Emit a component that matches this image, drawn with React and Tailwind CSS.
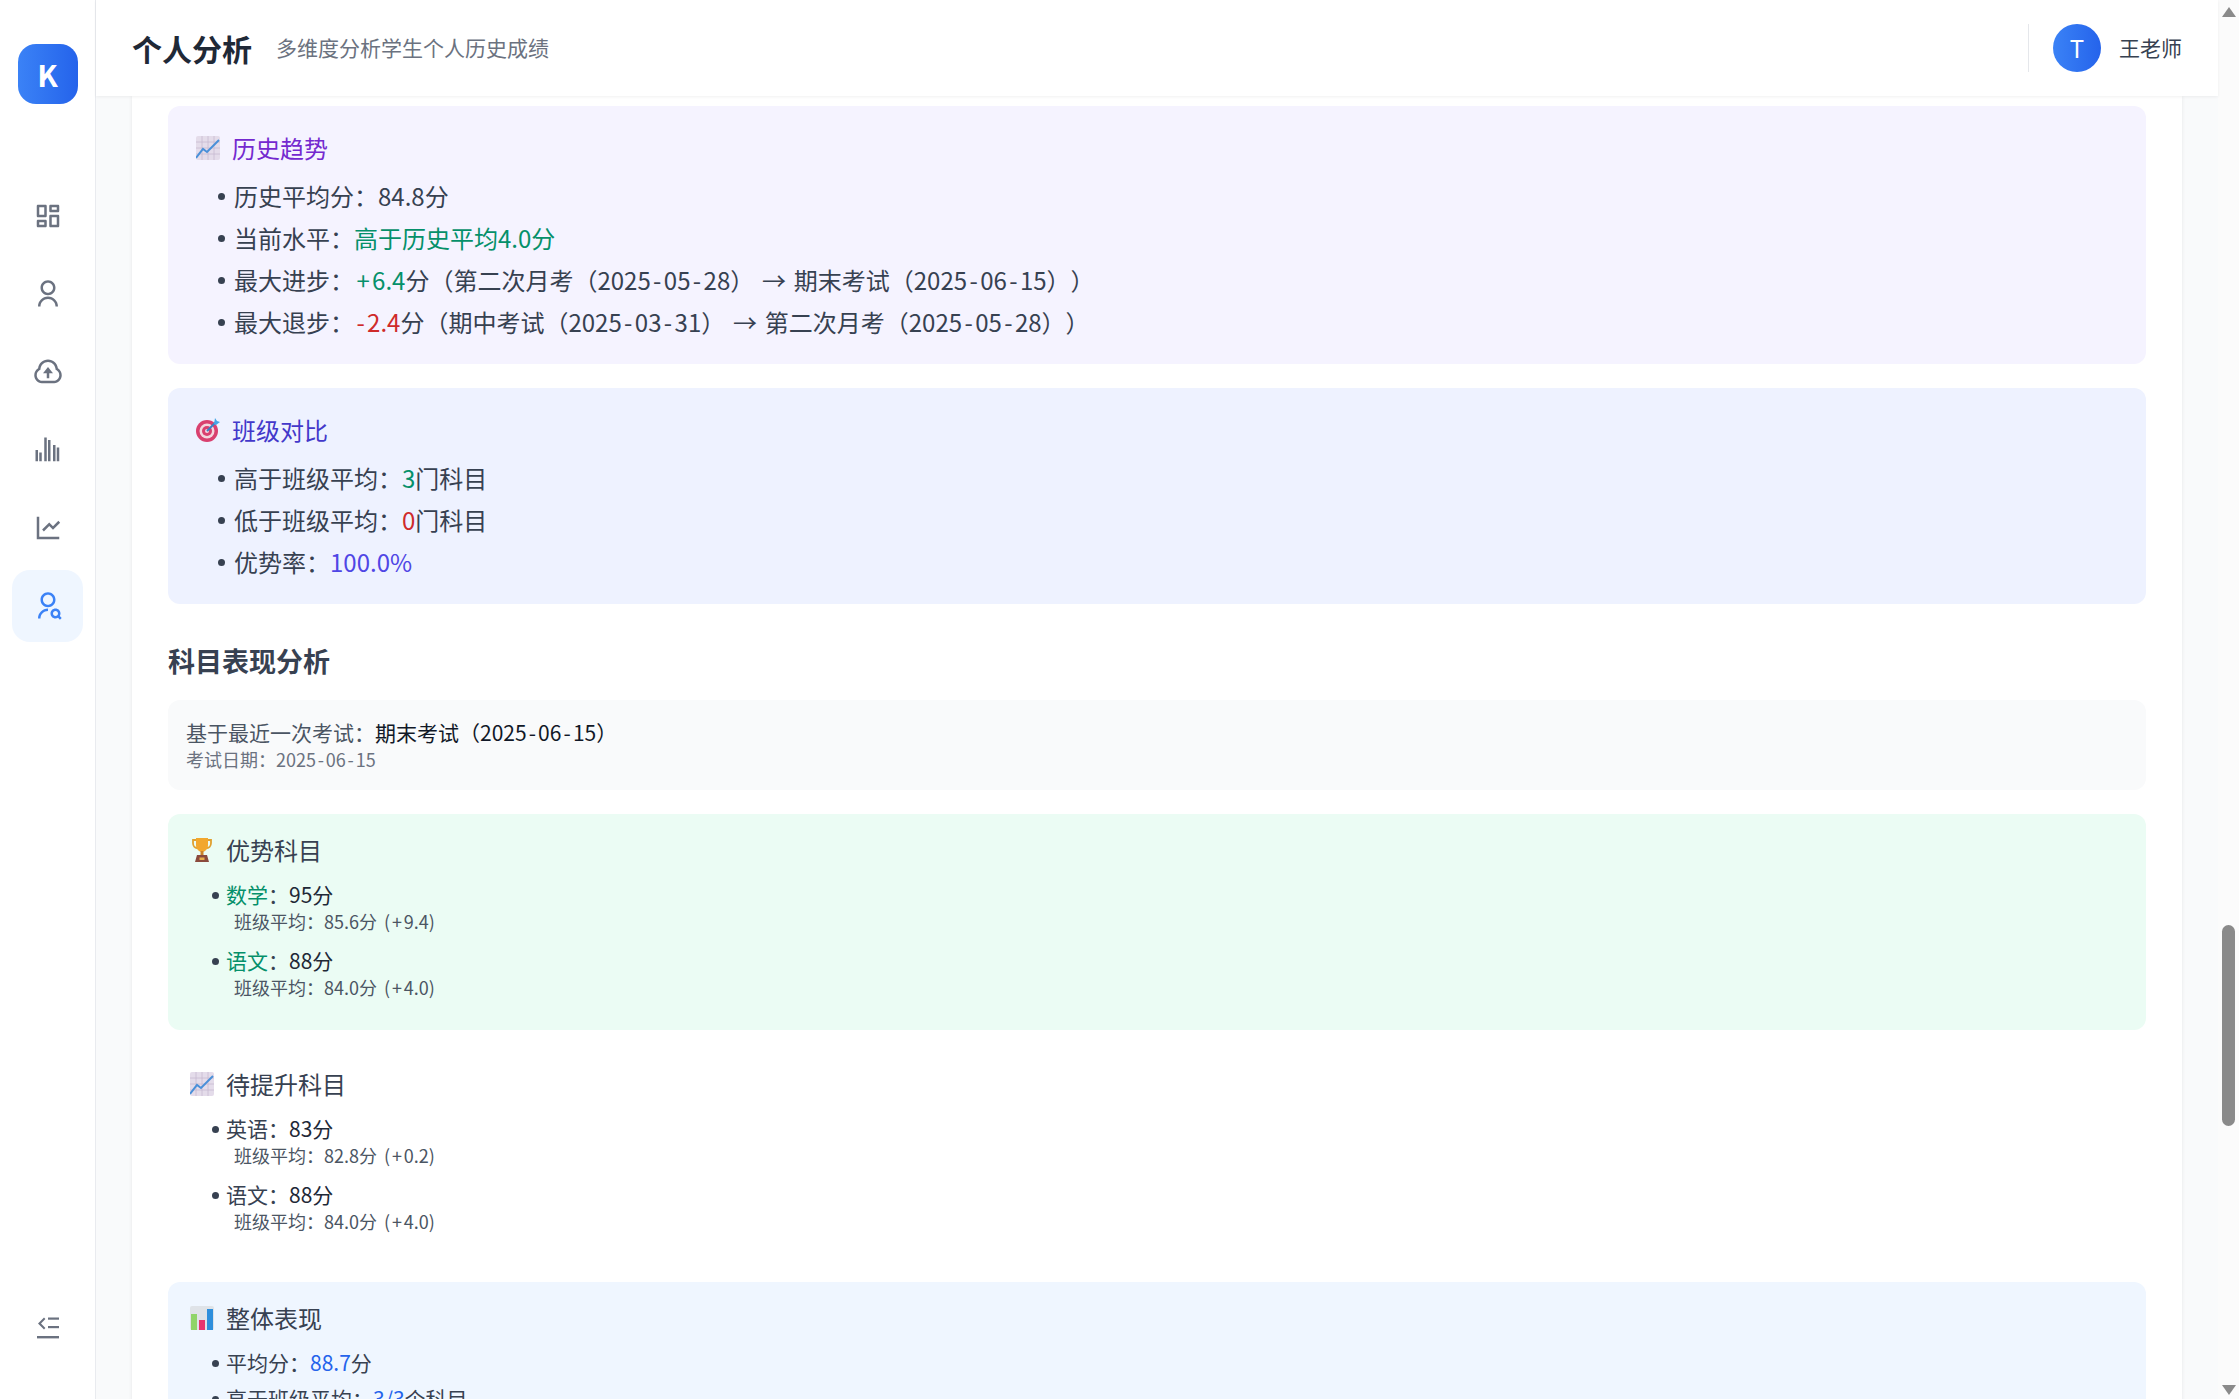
import React from 'react';
import {
  RiDashboardLine,
  RiUserLine,
  RiUploadCloudLine,
  RiBarChartGroupedLine,
  RiLineChartLine,
  RiUserSearchLine,
} from 'react-icons/ri';

const navItems = [
  { icon: RiDashboardLine },
  { icon: RiUserLine },
  { icon: RiUploadCloudLine },
  { icon: RiBarChartGroupedLine },
  { icon: RiLineChartLine },
  { icon: RiUserSearchLine, active: true },
];

const ChartEmoji = () => (
  <svg viewBox="0 0 24 24" className="w-6 h-6 shrink-0 ml-1 mr-3">
    <rect x="0" y="0" width="24" height="24" rx="2" fill="#e4dcea" />
    <path d="M6 0v24M12 0v24M18 0v24M0 6h24M0 12h24M0 18h24" stroke="#c6bad2" strokeWidth="0.8" />
    <path d="M0 22 L7 13 L11 16 L23 4" fill="none" stroke="#4a90d9" strokeWidth="2" />
  </svg>
);

const TargetEmoji = () => (
  <svg viewBox="0 0 24 24" className="w-6 h-6 shrink-0 ml-1 mr-3">
    <circle cx="11" cy="13" r="11" fill="#d9406f" />
    <circle cx="11" cy="13" r="7.5" fill="#f3d6de" />
    <circle cx="11" cy="13" r="5" fill="#d9406f" />
    <circle cx="11" cy="13" r="2" fill="#f3d6de" />
    <path d="M11 13 L20 4" stroke="#3b7fc4" strokeWidth="2" />
    <path d="M18 6 L19 0 L21 3 L24 4 L20 7 Z" fill="#45a6e6" />
  </svg>
);

const TrophyEmoji = () => (
  <svg viewBox="0 0 24 24" className="w-6 h-6 shrink-0 ml-1 mr-3">
    <path d="M3 2h18v3c0 3-2 5-4 5h-10c-2 0-4-2-4-5z" fill="none" stroke="#e0a030" strokeWidth="1.8" />
    <path d="M6 0h12v7c0 4-3 7-6 7s-6-3-6-7z" fill="#f2a72e" />
    <rect x="10.5" y="13" width="3" height="4" fill="#c9822a" />
    <path d="M7 17h10l2 7H5z" fill="#8a4a3c" />
    <rect x="9.5" y="19.5" width="5" height="2.5" fill="#e8b04a" />
  </svg>
);

const BarsEmoji = () => (
  <svg viewBox="0 0 24 24" className="w-6 h-6 shrink-0 ml-1 mr-3">
    <rect x="0" y="0" width="24" height="24" rx="2" fill="#dfe3e8" />
    <rect x="1" y="8" width="6" height="16" fill="#8fd468" />
    <rect x="9" y="14" width="6" height="10" fill="#e8356f" />
    <rect x="17" y="3" width="6" height="21" fill="#2f8fdc" />
  </svg>
);

const CollapseIcon = () => (
  <svg viewBox="0 0 24 24" className="w-[24px] h-[24px]" fill="#6b7280">
    <path d="M8 1.5 L9.4 3 L5 7.5 L9.4 12 L8 13.5 L2 7.5 Z" />
    <rect x="12" y="1.5" width="11" height="2.2" />
    <rect x="12" y="10" width="11" height="2.2" />
    <rect x="1" y="20" width="22" height="2.4" />
  </svg>
);

// the hyphen and plus sign sit wider in the source font
const Wide = ({ children }) => <span className="px-[0.1em]">{children}</span>;

const ExamDate = ({ value }) => {
  const [y, m, d] = value.split('-');
  return <>{y}<Wide>-</Wide>{m}<Wide>-</Wide>{d}</>;
};

const Dot = () => <span className="block w-[7px] h-[7px] rounded-full bg-[#374151] ml-[2px]" />;

const Line = ({ children }) => (
  <li className="flex h-9 leading-9 text-[24px] text-[#374151] whitespace-pre">
    <span className="w-[18px] h-9 shrink-0 flex items-center"><Dot /></span>
    <span>{children}</span>
  </li>
);

const SmallLine = ({ children, className = '' }) => (
  <li className={`flex h-[30px] leading-[28px] text-[21px] text-[#374151] ${className}`}>
    <span className="w-4 h-[30px] shrink-0 flex items-center"><Dot /></span>
    <span>{children}</span>
  </li>
);

const Subject = ({ name, nameClass, score, avg, diff }) => (
  <div className="mb-3">
    <SmallLine>
      <span className={nameClass}>{name}</span>：<span className="text-[#1f2937]">{score}分</span>
    </SmallLine>
    <div className="h-6 leading-[22px] text-[18px] text-[#4b5563] pl-6 [word-spacing:3px]">
      班级平均：{avg}分 (<Wide>+</Wide>{diff})
    </div>
  </div>
);

const SubjectBox = ({ bg, icon, title, children }) => (
  <div className={`rounded-[12px] p-[18px] ${bg}`}>
    <h4 className="flex items-center h-9 text-[24px] font-normal text-[#374151] mb-3">
      {icon}
      {title}
    </h4>
    <ul className="pl-6">{children}</ul>
  </div>
);

export default function App() {
  return (
    <div className="flex h-screen w-full overflow-hidden bg-[#f9fafb] [text-spacing-trim:space-all] font-['Noto_Sans_CJK_SC','Noto_Sans',sans-serif]">
      {/* sidebar */}
      <aside className="w-24 shrink-0 flex flex-col items-center bg-white border-r border-[#e9ebef] pt-11 pb-[35px]">
        <div className="w-[60px] h-[60px] rounded-[18px] bg-gradient-to-r from-[#3b82f6] to-[#2563eb] flex items-center justify-center text-white text-[30px] font-bold">
          K
        </div>
        <nav className="mt-[76px] flex flex-col gap-[6px]">
          {navItems.map((item, i) => (
            <div
              key={i}
              className={`w-[71px] h-[72px] rounded-[18px] flex items-center justify-center ${item.active ? 'bg-[#eff6ff] text-[#3b82f6]' : 'text-[#6b7280]'}`}
            >
              <item.icon className="w-[30px] h-[30px]" />
            </div>
          ))}
        </nav>
        <div className="mt-auto w-[71px] h-[72px] flex items-center justify-center">
          <CollapseIcon />
        </div>
      </aside>

      {/* main */}
      <div className="flex-1 min-w-0 flex flex-col">
        <header className="relative z-10 h-24 shrink-0 bg-white shadow-[0_1px_3px_rgba(0,0,0,0.06)] flex items-center px-9">
          <h1 className="text-[30px] font-bold text-[#1f2937]">个人分析</h1>
          <p className="ml-6 text-[21px] text-[#6b7280]">多维度分析学生个人历史成绩</p>
          <div className="ml-auto flex items-center h-12 border-l-[1.5px] border-[#e5e7eb] pl-6">
            <div className="w-12 h-12 rounded-full bg-gradient-to-r from-[#3b82f6] to-[#2563eb] flex items-center justify-center text-white text-[24px]">
              T
            </div>
            <span className="ml-[18px] text-[21px] text-[#374151]">王老师</span>
          </div>
        </header>

        <main className="flex-1 min-h-0 overflow-hidden px-9">
          <div className="bg-white shadow-[0_0_4px_rgba(0,0,0,0.08)] px-9 pt-[10px]">
            <section className="rounded-[12px] bg-[#f5f3ff] p-6">
              <h4 className="flex items-center h-9 text-[24px] font-normal text-[#7429cf] mb-3">
                <ChartEmoji />
                历史趋势
              </h4>
              <ul className="pl-6 flex flex-col gap-[6px]">
                <Line>历史平均分：84.8分</Line>
                <Line>当前水平：<span className="text-[#05906a]">高于历史平均4.0分</span></Line>
                <Line>最大进步：<span className="text-[#05906a]"><Wide>+</Wide>6.4</span>分（第二次月考（<ExamDate value="2025-05-28" />） <Wide>→</Wide> 期末考试（<ExamDate value="2025-06-15" />））</Line>
                <Line>最大退步：<span className="text-[#cf2a2a]"><Wide>-</Wide>2.4</span>分（期中考试（<ExamDate value="2025-03-31" />） <Wide>→</Wide> 第二次月考（<ExamDate value="2025-05-28" />））</Line>
              </ul>
            </section>

            <section className="mt-6 rounded-[12px] bg-[#eef2ff] p-6">
              <h4 className="flex items-center h-9 text-[24px] font-normal text-[#4338ca] mb-3">
                <TargetEmoji />
                班级对比
              </h4>
              <ul className="pl-6 flex flex-col gap-[6px]">
                <Line>高于班级平均：<span className="text-[#05906a]">3</span>门科目</Line>
                <Line>低于班级平均：<span className="text-[#cf2a2a]">0</span>门科目</Line>
                <Line>优势率：<span className="text-[#4f46e5]">100.0%</span></Line>
              </ul>
            </section>

            <h3 className="mt-9 mb-[18px] text-[27px] leading-[42px] font-bold text-[#374151]">科目表现分析</h3>

            <div className="rounded-[12px] bg-[#f9fafb] p-[18px] mb-6">
              <p className="h-[30px] text-[21px] leading-[28px] text-[#4b5563]">
                基于最近一次考试：<span className="text-[#111827]">期末考试（<ExamDate value="2025-06-15" />）</span>
              </p>
              <p className="h-6 text-[18px] leading-[22px] text-[#6b7280]">
                考试日期：<ExamDate value="2025-06-15" />
              </p>
            </div>

            <div className="flex flex-col gap-[18px]">
              <SubjectBox bg="bg-[#ebfcf4]" icon={<TrophyEmoji />} title="优势科目">
                <Subject name="数学" nameClass="text-[#05906a]" score="95" avg="85.6" diff="9.4" />
                <Subject name="语文" nameClass="text-[#05906a]" score="88" avg="84.0" diff="4.0" />
              </SubjectBox>

              <SubjectBox bg="bg-white" icon={<ChartEmoji />} title="待提升科目">
                <Subject name="英语" score="83" avg="82.8" diff="0.2" />
                <Subject name="语文" score="88" avg="84.0" diff="4.0" />
              </SubjectBox>

              <SubjectBox bg="bg-[#eff6ff]" icon={<BarsEmoji />} title="整体表现">
                <SmallLine className="mb-[6px]">
                  平均分：<span className="text-[#2563eb]">88.7</span>分
                </SmallLine>
                <SmallLine>
                  高于班级平均：<span className="text-[#2563eb]">3/3</span>个科目
                </SmallLine>
              </SubjectBox>
            </div>
          </div>
        </main>
      </div>

      {/* scrollbar */}
      <div className="w-[21px] shrink-0 bg-[#fbfbfb] flex flex-col items-center pt-[7px] pb-1">
        <svg viewBox="0 0 14 10" className="w-[14px] h-[10px]" fill="#8a8a8a">
          <path d="M7 0 L14 10 H0 Z" />
        </svg>
        <div className="mt-[908px] w-[13px] h-[201px] rounded-full bg-[#8a8a8a]" />
        <svg viewBox="0 0 14 10" className="mt-auto w-[14px] h-[10px]" fill="#8a8a8a">
          <path d="M0 0 H14 L7 10 Z" />
        </svg>
      </div>
    </div>
  );
}
